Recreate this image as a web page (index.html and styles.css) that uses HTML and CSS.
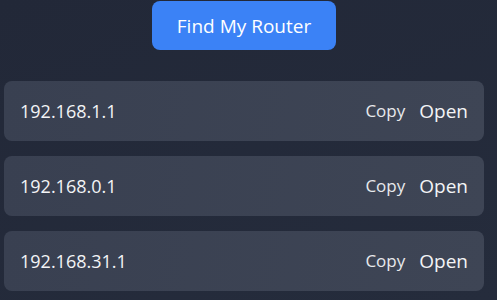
FILE: index.html
```html
<!DOCTYPE html>
<html lang="en">

<head>
    <title>Find My Router</title>
    <link rel="stylesheet" href="styles.css">
</head>

<body>
    <div class="app">
        <button class="find-button" id="findButton">Find My Router</button>

        <div class="router-list" id="routerList">
            <div class="router-row">
                <span class="router-ip">192.168.1.1</span>
                <div class="router-actions">
                    <button class="link-button copy">Copy</button>
                    <button class="link-button open">Open</button>
                </div>
            </div>
            <div class="router-row">
                <span class="router-ip">192.168.0.1</span>
                <div class="router-actions">
                    <button class="link-button copy">Copy</button>
                    <button class="link-button open">Open</button>
                </div>
            </div>
            <div class="router-row">
                <span class="router-ip">192.168.31.1</span>
                <div class="router-actions">
                    <button class="link-button copy">Copy</button>
                    <button class="link-button open">Open</button>
                </div>
            </div>
        </div>
    </div>
</body>

</html>
```

FILE: styles.css
```css
html,
body {
    height: 100%;
}

body {
    margin: 0;
    background: linear-gradient(160deg, #222838 0%, #252c3c 100%);
    color: #f3f4f6;
    font-family: "Open Sans", "Noto Sans", sans-serif;
    box-sizing: border-box;
    overflow: hidden;
}

.app {
    display: flex;
    flex-direction: column;
    align-items: center;
    width: 480px;
    margin-left: 4px;
    padding-top: 1px;
}

.find-button {
    width: 184px;
    height: 49px;
    background-color: #3b82f6;
    color: #ffffff;
    border: none;
    border-radius: 8px;
    font-family: inherit;
    font-size: 19px;
    cursor: pointer;
}

.router-list {
    display: flex;
    flex-direction: column;
    gap: 15px;
    width: 100%;
    margin-top: 31px;
}

.router-row {
    display: flex;
    align-items: center;
    justify-content: space-between;
    height: 60px;
    padding: 0 16px 1px;
    background: linear-gradient(100deg, #394051 0%, #3e4555 100%);
    border-radius: 8px;
    box-sizing: border-box;
}

.router-ip {
    font-size: 18px;
    color: #f3f4f6;
}

.router-actions {
    display: flex;
    align-items: center;
    gap: 14px;
}

.link-button {
    padding: 0;
    background: none;
    border: none;
    color: #f3f4f6;
    font-family: inherit;
    cursor: pointer;
}

.link-button.copy {
    font-size: 17px;
    color: #e8e9ec;
}

.link-button.open {
    font-size: 19px;
}
```
